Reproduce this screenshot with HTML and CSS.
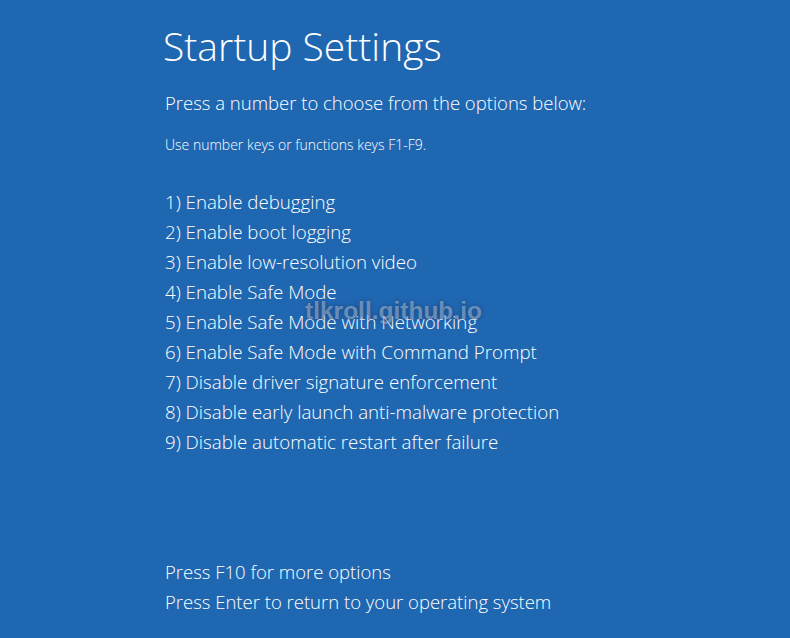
FILE: index.html
```html
<!DOCTYPE html>
<html lang="en">
<head>
    <meta charset="UTF-8">
    <title>Startup Settings</title>
    <link rel="stylesheet" href="styles.css">
</head>
<body>
    <div class="screen">
        <h1 class="title">Startup Settings</h1>
        <p class="lead">Press a number to choose from the options below:</p>
        <p class="hint">Use number keys or functions keys F1-F9.</p>

        <ol class="options">
            <li>1) Enable debugging</li>
            <li>2) Enable boot logging</li>
            <li>3) Enable low-resolution video</li>
            <li>4) Enable Safe Mode</li>
            <li>5) Enable Safe Mode with Networking</li>
            <li>6) Enable Safe Mode with Command Prompt</li>
            <li>7) Disable driver signature enforcement</li>
            <li>8) Disable early launch anti-malware protection</li>
            <li>9) Disable automatic restart after failure</li>
        </ol>

        <div class="footer">
            <p>Press F10 for more options</p>
            <p>Press Enter to return to your operating system</p>
        </div>

        <div class="watermark">tlkroll.github.io</div>
    </div>
</body>
</html>
```

FILE: styles.css
```css
html, body {
    margin: 0;
    height: 100%;
}
body {
    background-color: #2067b2;
    color: #ffffff;
    font-family: 'Open Sans', 'Noto Sans', sans-serif;
    font-weight: 300;
}
.screen {
    position: relative;
    height: 638px;
    padding-left: 165px;
    box-sizing: border-box;
    overflow: hidden;
}
.title {
    margin: 0;
    padding-top: 20px;
    font-size: 39px;
    font-weight: 300;
    line-height: 52px;
    margin-left: -2px;
}
.lead {
    margin: 18px 0 0;
    font-size: 18.5px;
    line-height: 26px;
}
.hint {
    margin: 20px 0 0;
    font-size: 14px;
    line-height: 18px;
}
.options {
    list-style: none;
    margin: 33px 0 0;
    padding: 0;
    font-size: 18.7px;
    line-height: 30px;
}
.footer {
    position: absolute;
    left: 165px;
    top: 557px;
    font-size: 18.5px;
    line-height: 30px;
}
.footer p {
    margin: 0;
}
.watermark {
    position: absolute;
    left: 305px;
    top: 297px;
    font-family: 'Liberation Sans', sans-serif;
    font-weight: 700;
    font-size: 24.5px;
    color: rgba(175, 190, 215, 0.55);
    text-shadow: 0 0 4px rgba(20, 50, 90, 0.6);
}
```
